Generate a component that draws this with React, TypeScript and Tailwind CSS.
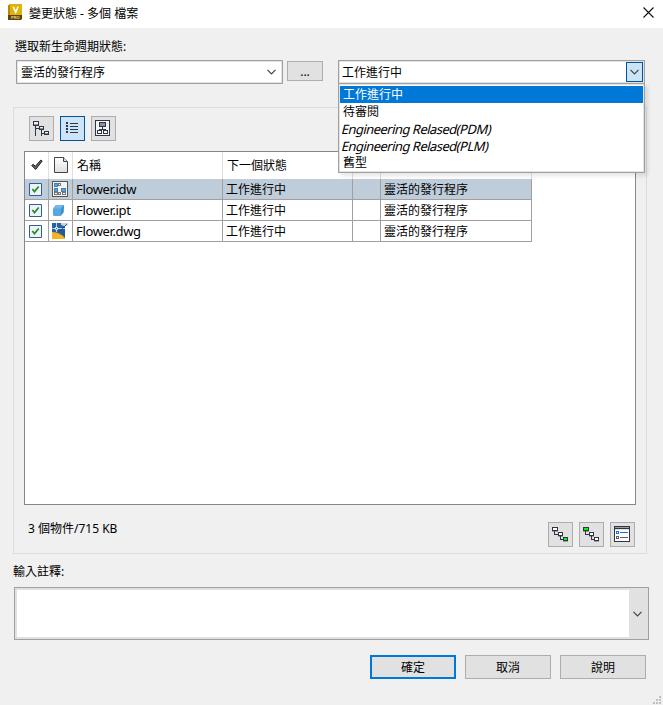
import type { ReactNode } from "react";
import clsx from "clsx";

const STATES = [
  { label: "工作進行中" },
  { label: "待審閱" },
  { label: "Engineering Relased(PDM)", italic: true },
  { label: "Engineering Relased(PLM)", italic: true },
  { label: "舊型" },
];

const FILES = [
  { name: "Flower.idw", icon: <DrawingIcon />, selected: true },
  { name: "Flower.ipt", icon: <PartIcon /> },
  { name: "Flower.dwg", icon: <DwgIcon /> },
];

const COLUMNS = "grid grid-cols-[24px_24px_150px_130px_28px_151px] w-[507px]";

function Chevron() {
  return (
    <svg width="9" height="6" viewBox="0 0 9 6" fill="none">
      <path d="M.5 .8 4.5 4.8 8.5 .8" stroke="#444" strokeWidth="1.2" />
    </svg>
  );
}

function VaultIcon() {
  return (
    <svg width="15" height="16" viewBox="0 0 15 16">
      <path d="M0 1.500 2 0h12v15l-1.500 1H0z" fill="#b58900" />
      <path d="M2 0h12v11H2z" fill="#dfb30c" />
      <path d="M0 11h14v4l-1.500 1H0z" fill="#5c4500" />
      <path d="m5.300 2.800 2.400 5.400 2.400-5.400" fill="none" stroke="#fff" strokeWidth="1.600" />
      <text x="3" y="15" fontSize="4" fontWeight="700" fill="#e8d9a0" fontFamily="Liberation Sans, sans-serif">
        PRO
      </text>
    </svg>
  );
}

function TreeIcon() {
  return (
    <svg width="17" height="15" viewBox="0 0 17 15" shapeRendering="crispEdges">
      <path d="M2 5h1v10H2zM2 7h5v1H2zM8 9h1v6H8zM8 12h4v1H8z" fill="#2f3542" />
      <path d="M.5 .5h5v4h-5zM6.500 5.500h4v3h-4zM11.500 10.500h4v3h-4z" fill="#f0f0f0" stroke="#2f3542" />
      <path d="M1 3h4v1H1zM7 7h3v1H7zM12 12h3v1h-3z" fill="#8b909c" />
    </svg>
  );
}

function ListIcon() {
  return (
    <svg width="13" height="13" viewBox="0 0 13 13" shapeRendering="crispEdges" fill="#2f3542">
      <path d="M0 0h2v2H0zM0 3h2v2H0zM0 6h2v2H0zM0 9h2v2H0z" />
      <path d="M4 1h8v1H4zM4 4h8v1H4zM4 7h8v1H4zM4 10h8v1H4z" />
    </svg>
  );
}

function OrgIcon() {
  return (
    <svg width="17" height="17" viewBox="0 0 17 17" shapeRendering="crispEdges" fill="none" stroke="#2f3542">
      <path d="M.5 .5h14v15H.5z" fill="#f5f5f5" />
      <path d="M4.500 2.500h6v4h-6z" fill="#8b909c" />
      <path d="M7.500 7v2M4.500 11V9.500h6V11" />
      <path d="M2.500 10.500h4v3h-4zM8.500 10.500h4v3h-4z" fill="#fff" />
    </svg>
  );
}

function StepsIcon({ active }: { active: "first" | "last" }) {
  return (
    <svg width="17" height="15" viewBox="0 0 17 15" shapeRendering="crispEdges" stroke="#2f3542">
      <path d="M0 4h6v1H0zM6 9h5v1H6zM11 14h5v1h-5z" fill="#9a9fa9" stroke="none" />
      <path d="M2.500 4v3.500H6M8.500 9v3.500H11" fill="none" />
      <path d="M.5 .5h5v3h-5z" fill={active === "first" ? "#00ff00" : "#fff"} />
      <path d="M6.500 5.500h4v3h-4z" fill="#fff" />
      <path d="M11.500 10.500h4v3h-4z" fill={active === "last" ? "#00ff00" : "#fff"} />
    </svg>
  );
}

function OptionsIcon() {
  return (
    <svg width="17" height="17" viewBox="0 0 17 17" shapeRendering="crispEdges" fill="none">
      <path d="M.5 .5h15v15H.5z" fill="#fff" stroke="#2f3542" />
      <path d="M1 1h14v1H1z" fill="#9a9fa9" />
      <path d="M1 2h14v1H1z" fill="#2f3542" />
      <path d="M1 3h14v1H1z" fill="#e1e1e1" />
      <path d="M2.500 5.500h2v2h-2z" stroke="#0b76e0" />
      <path d="M2.500 10.500h2v2h-2z" stroke="#5a5d68" />
      <path d="M6 6h8v1H6z" fill="#0b76e0" />
      <path d="M6 11h8v1H6z" fill="#5a5d68" />
    </svg>
  );
}

function HeaderCheckIcon() {
  return (
    <svg width="12" height="12" viewBox="0 0 12 12">
      <path d="m.7 6.500 1.500-1.200L4.300 7.300 9.800 1.100l1.400 1L4.600 10.500z" fill="#666" stroke="#111" strokeWidth=".9" />
    </svg>
  );
}

function PageIcon() {
  return (
    <svg width="14" height="17" viewBox="0 0 14 17">
      <defs>
        <linearGradient id="page" x2="0" y2="1">
          <stop stopColor="#fff" />
          <stop offset="1" stopColor="#dedede" />
        </linearGradient>
      </defs>
      <path d="M.5 .5H9.500L13.500 4.500V15.500H.5z" fill="url(#page)" stroke="#444" />
      <path d="M9.500 .5v4h4" fill="#ddd" stroke="#444" />
    </svg>
  );
}

function CheckboxIcon() {
  return (
    <svg width="13" height="13" viewBox="0 0 13 13">
      <path d="M.5 .5h12v12H.5z" fill="#f0f2f5" stroke="#2d6099" />
      <path d="M3.300 6 5.500 8.500 9.700 3.500" fill="none" stroke="#21912b" strokeWidth="1.800" />
    </svg>
  );
}

function DrawingIcon() {
  return (
    <svg width="16" height="16" viewBox="0 0 16 16" shapeRendering="crispEdges">
      <path d="M.5 .5h15v15H.5z" fill="#f1f3f4" stroke="#555" />
      <path d="M2.500 2.500h3v3h-3zM2.500 7.500h3v3h-3zM9.500 7.500h4v3h-4z" fill="#56a9e0" stroke="#4a7ea3" />
      <path d="M6.500 2.500h2v2h-2zM2.500 11.500h3v2h-3zM6.500 11.500h2v2h-2zM10.500 11.500h3v2h-3z" fill="#fff" stroke="#777" />
    </svg>
  );
}

function PartIcon() {
  return (
    <svg width="13" height="13" viewBox="0 0 13 13">
      <path d="M1 4.500 4 1h8l-.500 7-3 4H1.800L1 11z" fill="#55a8e2" />
      <path d="M1 4.500 4 1h8L9 4.500z" fill="#72b8ea" />
      <path d="M9 4.500 12 1l-.500 7.500-2.800 3.500z" fill="#3f8fca" />
    </svg>
  );
}

function DwgIcon() {
  return (
    <svg width="16" height="16" viewBox="0 0 16 16">
      <path d="M0 0h13v16H0z" fill="#29619b" />
      <path d="M9 4h4v12H9z" fill="#265a91" />
      <path d="M0 9c5 0 11 3 13 6v1H0z" fill="#f5b324" />
      <path d="M9 0h7v2l-3 1.500L9 2z" fill="#c3d3e2" />
      <path d="M4.500 0v9M0 5.500h13" stroke="#dfe9f3" strokeWidth=".8" />
      <path d="M3.500 4.500h2v2h-2z" fill="#29619b" stroke="#e5edf5" />
      <path d="M15 1 7 9" stroke="#173f6c" strokeWidth=".8" />
    </svg>
  );
}

function ToolButton({ active, children }: { active?: boolean; children: ReactNode }) {
  return (
    <button
      className={clsx(
        "flex size-[25px] items-center justify-center border",
        active ? "border-[#005499] bg-[#cce4f7]" : "border-[#adadad] bg-[#e1e1e1]",
      )}
    >
      {children}
    </button>
  );
}

function DialogButton({ primary, children }: { primary?: boolean; children: ReactNode }) {
  return (
    <button
      className={clsx(
        "flex h-6 w-[86px] items-center justify-center bg-[#e1e1e1] pt-0.5",
        primary ? "border-2 border-[#0078d7]" : "border border-[#adadad]",
      )}
    >
      {children}
    </button>
  );
}

function StateList() {
  return (
    <ul className="absolute -left-px top-[22px] h-[90px] w-[307px] border border-[#a0a0a0] bg-white pt-0.5 shadow-[3px_3px_4px_rgba(0,0,0,0.1)] ring-1 ring-inset ring-[#e3e3e3]">
      {STATES.map((state, i) => (
        <li
          key={state.label}
          className={clsx(
            "mx-px flex h-[17px] items-center whitespace-nowrap",
            i === 0 && "bg-[#0078d7] text-white",
            state.italic ? "pl-[2px] text-[13px] tracking-[-0.53px]" : "pt-px pl-[3px]",
          )}
        >
          {/* slanted upright letters, the font's own italic has other shapes */}
          <span className={clsx(state.italic && "-skew-x-[14deg]")}>{state.label}</span>
        </li>
      ))}
    </ul>
  );
}

function FileTable() {
  return (
    <div className="mt-[10px] ml-[10px] h-[354px] w-[612px] border border-[#828790] bg-white">
      <div className={clsx(COLUMNS, "h-[27px] [&>*]:border-r [&>*]:border-[#e0e0e0]")}>
        <div className="flex items-center justify-center pb-0.5">
          <HeaderCheckIcon />
        </div>
        <div className="flex items-center pl-[5px]">
          <PageIcon />
        </div>
        <div className="flex items-center pt-px pl-1">名稱</div>
        <div className="flex items-center pt-px pl-1">下一個狀態</div>
        <div />
        <div />
      </div>
      {FILES.map((file) => (
        <div
          key={file.name}
          className={clsx(
            COLUMNS,
            "h-[21px] border-b border-[#a0a0a0] [&>*]:border-r [&>*]:border-[#a0a0a0]",
            file.selected && "bg-[#bfcddb]",
          )}
        >
          <div className="flex items-center pl-1">
            <CheckboxIcon />
          </div>
          <div className="flex items-center pl-[3px]">{file.icon}</div>
          <div className="flex items-center pl-[3px] text-[13px] tracking-[-0.35px]">{file.name}</div>
          <div className="flex items-center pt-0.5 pl-[3px]">工作進行中</div>
          <div />
          <div className="flex items-center pt-0.5 pl-[3px]">靈活的發行程序</div>
        </div>
      ))}
    </div>
  );
}

export default function App() {
  return (
    <div className="flex h-[705px] w-[663px] flex-col overflow-hidden bg-[#f0f0f0] font-['Noto_Sans','Noto_Sans_CJK_TC',sans-serif] text-[12px] leading-4 text-black">
      <header className="flex h-7 shrink-0 items-center bg-white pl-2 pb-1">
        <VaultIcon />
        <span className="ml-[6px] pt-[3px]">變更狀態 - 多個 檔案</span>
        <svg className="mr-[9px] ml-auto" width="11" height="11" viewBox="0 0 11 11">
          <path d="m.5 .5 10 10m0-10-10 10" stroke="#111" strokeWidth="1.100" />
        </svg>
      </header>

      <div className="mt-[11px] ml-[15px] h-4">選取新生命週期狀態:</div>

      <div className="mt-[5px] ml-4 flex h-6 shrink-0">
        <div className="flex w-[267px] items-center justify-between border border-[#a0a0a0] bg-white pr-[6px] pl-1 ring-1 ring-inset ring-[#e3e3e3]">
          <span className="pt-px">靈活的發行程序</span>
          <Chevron />
        </div>
        <button className="mt-px ml-1 flex h-5 w-9 items-center justify-center border border-[#adadad] bg-[#e1e1e1] pt-0.5">
          ...
        </button>
        <div className="relative z-10 ml-[15px] flex w-[307px] items-center justify-between border border-[#a0a0a0] bg-white pr-px pl-[3px] ring-1 ring-inset ring-[#e3e3e3]">
          <span className="pt-px">工作進行中</span>
          <span className="flex h-5 w-[17px] items-center justify-center border border-[#005499] bg-[#cce4f7]">
            <Chevron />
          </span>
          <StateList />
        </div>
      </div>

      <section className="mt-[23px] ml-[13px] h-[447px] w-[634px] shrink-0 border border-[#dcdcdc] pt-2">
        <div className="ml-[15px] flex gap-[6px]">
          <ToolButton>
            <TreeIcon />
          </ToolButton>
          <ToolButton active>
            <ListIcon />
          </ToolButton>
          <ToolButton>
            <OrgIcon />
          </ToolButton>
        </div>
        <FileTable />
        <div className="mt-[17px] mr-[11px] ml-[14px] flex justify-between">
          <span className="-mt-px">3 個物件/715 KB</span>
          <div className="flex gap-[6px]">
            <ToolButton>
              <StepsIcon active="last" />
            </ToolButton>
            <ToolButton>
              <StepsIcon active="first" />
            </ToolButton>
            <ToolButton>
              <OptionsIcon />
            </ToolButton>
          </div>
        </div>
      </section>

      <div className="mt-[10px] ml-[13px] h-4">輸入註釋:</div>
      <div className="mt-[7px] ml-[14px] flex h-[53px] w-[635px] shrink-0 border border-[#a0a0a0] bg-[#e1e1e1] p-0.5">
        <div className="w-[612px] bg-white" />
        <div className="flex flex-1 items-center justify-center">
          <Chevron />
        </div>
      </div>

      <footer className="mt-[15px] mr-[17px] flex justify-end gap-[9px]">
        <DialogButton primary>確定</DialogButton>
        <DialogButton>取消</DialogButton>
        <DialogButton>說明</DialogButton>
      </footer>
      <svg className="mt-auto mr-0.5 mb-px ml-auto" width="8" height="8" viewBox="0 0 8 8" fill="#bfbfbf">
        <path d="M6 0h2v2H6zM3 3h2v2H3zM6 3h2v2H6zM0 6h2v2H0zM3 6h2v2H3zM6 6h2v2H6z" />
      </svg>
    </div>
  );
}
